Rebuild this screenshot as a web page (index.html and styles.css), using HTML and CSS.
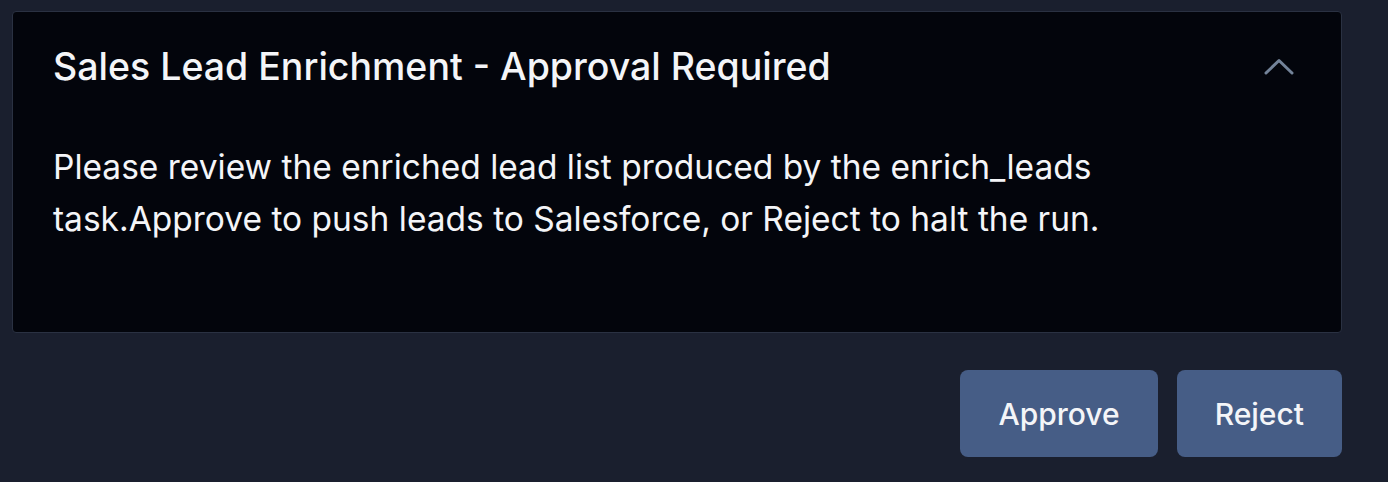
FILE: index.html
```html
<!DOCTYPE html>
<html lang="en">
<head>
  <link rel="stylesheet" href="styles.css">
</head>
<body>
  <div class="approval">
    <section class="card">
      <header class="card-head">
        <h2>Sales Lead Enrichment - Approval Required</h2>
        <button class="toggle" aria-label="Collapse">
          <svg width="32" height="19" viewBox="0 0 32 19">
            <path d="M3 16 L16 3.5 L29 16" fill="none" stroke="#738399" stroke-width="3" stroke-linecap="round" stroke-linejoin="round"/>
          </svg>
        </button>
      </header>
      <p class="card-body">Please review the enriched lead list produced by the enrich_leads task.Approve to push leads to Salesforce, or Reject to halt the run.</p>
    </section>
    <div class="actions">
      <button class="btn">Approve</button>
      <button class="btn">Reject</button>
    </div>
  </div>
</body>
</html>
```

FILE: styles.css
```css
html, body {
  margin: 0;
  background: #1a1f2e;
  font-family: Inter, "Noto Sans", sans-serif;
  color: #f4f5f8;
}

.approval {
  padding: 11px 46px 24px 12px;
}

.card {
  background: #03050c;
  border: 1px solid #2a3142;
  border-radius: 4px;
  padding: 0 40px 87px 40px;
}

.card-head {
  display: flex;
  align-items: center;
  justify-content: space-between;
  height: 108px;
}

.card-head h2 {
  margin: 0;
  font-size: 37.5px;
  font-weight: 500;
}

.toggle {
  background: none;
  border: 0;
  padding: 0;
  margin-right: 6px;
  display: flex;
}

.card-body {
  margin: 21px 0 0;
  width: 1120px;
  font-size: 33.5px;
  line-height: 52px;
}

.actions {
  display: flex;
  justify-content: flex-end;
  gap: 19px;
  margin-top: 37px;
}

.btn {
  background: #465d86;
  color: #f4f5f8;
  border: 0;
  border-radius: 8px;
  height: 87px;
  padding: 0 38px;
  font-family: inherit;
  font-size: 30px;
  font-weight: 500;
}
```
